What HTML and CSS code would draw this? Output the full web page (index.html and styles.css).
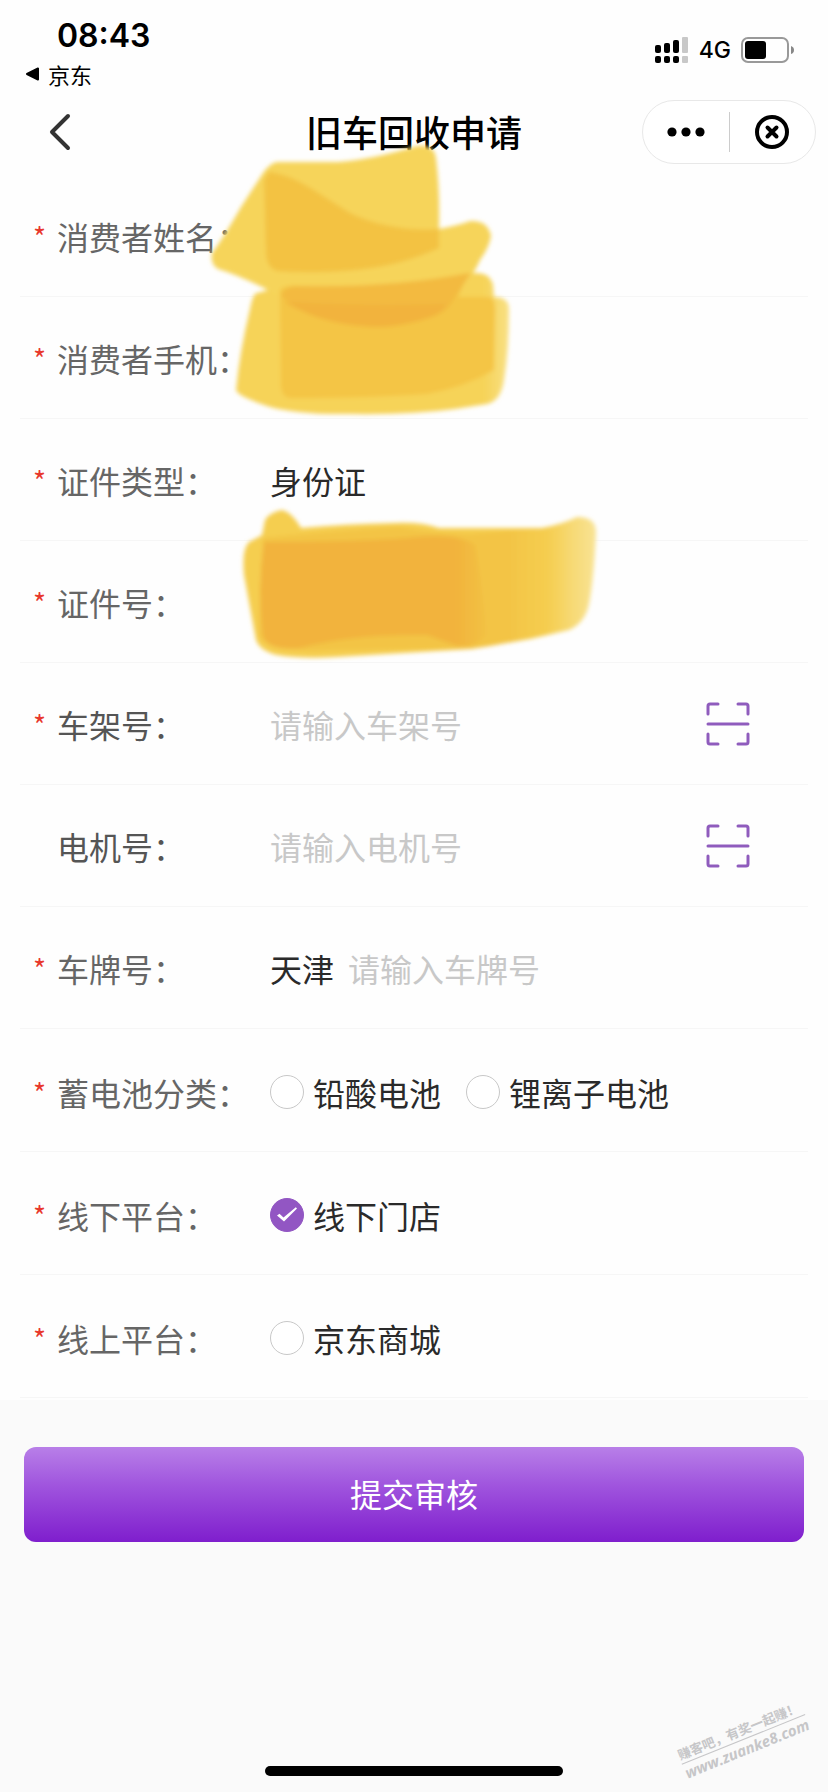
FILE: index.html
```html
<!DOCTYPE html>
<html lang="zh-CN">
<head>
<meta charset="utf-8">
<meta name="viewport" content="width=device-width, initial-scale=1">
<title>旧车回收申请</title>
<link rel="stylesheet" href="styles.css">
</head>
<body>
<div class="page">
  <div class="status">
    <div class="status-left">
      <span class="clock">08:43</span>
      <a class="return" href="#"><svg width="14" height="14" viewBox="0 0 14 14" aria-hidden="true"><path d="M1 7 12 1.500V12.500Z" stroke="#000" stroke-width="2" stroke-linejoin="round"/></svg>京东</a>
    </div>
    <div class="status-right">
      <svg width="34" height="28" viewBox="0 0 34 28" aria-hidden="true">
        <g fill="#000"><rect x="0" y="9" width="6" height="8" rx="2"/><rect x="9" y="7" width="6" height="10" rx="2"/><rect x="18" y="4" width="6" height="13" rx="2"/><rect x="0" y="20" width="6" height="7" rx="2"/><rect x="9" y="20" width="6" height="7" rx="2"/><rect x="18" y="20" width="6" height="7" rx="2"/></g>
        <g fill="#c8c8c8"><rect x="27" y="1" width="6" height="16" rx="1"/><rect x="27" y="20" width="6" height="7" rx="1"/></g>
      </svg>
      <span class="network">4G</span>
      <svg width="54" height="26" viewBox="0 0 54 26" aria-hidden="true">
        <rect x="1" y="1" width="46" height="24" rx="6" fill="none" stroke="#999" stroke-width="2"/>
        <rect x="4" y="4" width="21" height="18" rx="3"/>
        <path d="M50 9Q53 10 53 13T50 17Z" fill="#888"/>
      </svg>
    </div>
  </div>

  <header class="nav">
    <button class="back" type="button" aria-label="返回"><svg width="24" height="38" viewBox="0 0 24 38" aria-hidden="true"><path d="M20 3 4 19 20 35" fill="none" stroke="#333" stroke-width="4" stroke-linecap="round" stroke-linejoin="round"/></svg></button>
    <h1 class="title">旧车回收申请</h1>
    <div class="capsule">
      <button class="capsule-btn more" type="button" aria-label="更多"><svg width="38" height="10" viewBox="0 0 38 10" aria-hidden="true"><circle cx="5" cy="5" r="4.600"/><circle cx="19" cy="5" r="4.600"/><circle cx="33" cy="5" r="4.600"/></svg></button>
      <button class="capsule-btn" type="button" aria-label="关闭"><svg width="34" height="34" viewBox="0 0 34 34" fill="none" stroke="#000" stroke-width="4" stroke-linecap="round" aria-hidden="true"><circle cx="17" cy="17" r="15"/><path d="m12.500 12.500 9 9m0-9-9 9"/></svg></button>
    </div>
  </header>

  <form class="form">
    <div class="fields">
      <div class="row"><span class="star">*</span><label class="label" for="name">消费者姓名：</label><input class="input" id="name" type="text"></div>
      <div class="row"><span class="star">*</span><label class="label" for="phone">消费者手机：</label><input class="input" id="phone" type="tel"></div>
      <div class="row"><span class="star">*</span><label class="label" for="idtype">证件类型：</label><select class="select" id="idtype"><option>身份证</option></select></div>
      <div class="row"><span class="star">*</span><label class="label" for="idno">证件号：</label><input class="input" id="idno" type="text"></div>
      <div class="row"><span class="star">*</span><label class="label dark" for="frame">车架号：</label><input class="input" id="frame" type="text" placeholder="请输入车架号">
        <button class="scan" type="button" aria-label="扫描车架号"><svg width="44" height="44" viewBox="0 0 44 44" aria-hidden="true"><path d="M2 12V4Q2 2 4 2H12M32 2H40Q42 2 42 4V12M42 32V40Q42 42 40 42H32M12 42H4Q2 42 2 40V32M2 22H42"/></svg></button></div>
      <div class="row"><span class="star"></span><label class="label dark" for="motor">电机号：</label><input class="input" id="motor" type="text" placeholder="请输入电机号">
        <button class="scan" type="button" aria-label="扫描电机号"><svg width="44" height="44" viewBox="0 0 44 44" aria-hidden="true"><path d="M2 12V4Q2 2 4 2H12M32 2H40Q42 2 42 4V12M42 32V40Q42 42 40 42H32M12 42H4Q2 42 2 40V32M2 22H42"/></svg></button></div>
      <div class="row"><span class="star">*</span><label class="label" for="plate">车牌号：</label><select class="select province" aria-label="省份"><option>天津</option></select><input class="input" id="plate" type="text" placeholder="请输入车牌号"></div>
      <div class="row options" role="radiogroup" aria-labelledby="battery"><span class="star">*</span><span class="label" id="battery">蓄电池分类：</span>
        <label class="option"><input class="radio" type="radio" name="battery">铅酸电池</label>
        <label class="option"><input class="radio" type="radio" name="battery">锂离子电池</label></div>
      <div class="row options" role="radiogroup" aria-labelledby="offline"><span class="star">*</span><span class="label" id="offline">线下平台：</span>
        <label class="option"><input class="radio" type="radio" name="platform" checked><svg class="tick" width="34" height="34" viewBox="0 0 34 34" aria-hidden="true"><path d="M7 17.500 9.500 15.800 13.500 19.500 25.800 9.200 27 10.400 14 23.500Z" fill="#fff"/></svg>线下门店</label></div>
      <div class="row options" role="radiogroup" aria-labelledby="online"><span class="star">*</span><span class="label" id="online">线上平台：</span>
        <label class="option"><input class="radio" type="radio" name="platform">京东商城</label></div>
    </div>
    <div class="actions"><button class="submit" type="submit">提交审核</button></div>
  </form>

  <footer class="footer">
    <div class="watermark"><span class="slogan">赚客吧，有奖一起赚！</span><span class="site">www.zuanke8.com</span></div>
    <div class="home"></div>
  </footer>

  <svg class="marker" width="620" height="680" viewBox="0 0 620 680" aria-hidden="true">
    <defs>
      <filter id="soft" x="-10%" y="-10%" width="120%" height="120%"><feGaussianBlur stdDeviation="2"/></filter>
      <linearGradient id="fade" gradientUnits="userSpaceOnUse" x1="545" y1="0" x2="600" y2="0"><stop offset="0" stop-color="#f5ce50"/><stop offset="1" stop-color="#f9e59a"/></linearGradient>
      <linearGradient id="fade2" gradientUnits="userSpaceOnUse" x1="484" y1="0" x2="512" y2="0"><stop offset="0" stop-color="#f6d358"/><stop offset="1" stop-color="#f9e28a"/></linearGradient>
      <linearGradient id="fade3" gradientUnits="userSpaceOnUse" x1="510" y1="0" x2="568" y2="0"><stop offset="0" stop-color="#f3c445"/><stop offset="1" stop-color="#f5ce50" stop-opacity="0"/></linearGradient>
      <linearGradient id="fade4" gradientUnits="userSpaceOnUse" x1="455" y1="0" x2="492" y2="0"><stop offset="0" stop-color="#f2b33c"/><stop offset="1" stop-color="#f3c445"/></linearGradient>
    </defs>
    <g filter="url(#soft)">
      <path fill="url(#fade2)" d="M257 293Q274 288 293 285Q390 285 470 274Q488 270 493 284L494 297Q509 297 509 309Q509 350 504 380Q501 401 487 404L455 409Q410 415 350 414Q300 415 270 407Q237 396 236 390Q240 350 250 309Q253 293 257 293Z"/>
      <path fill="#f6d45a" d="M277 162H338Q370 160 417 146Q434 144 436 158Q440 190 439 229Q460 225 470 221Q488 220 491 236Q489 248 480 260Q474 275 455 297Q447 312 435 316Q405 327 376 327Q330 325 300 307Q280 297 266 289Q238 275 218 269Q210 264 212 253Q222 240 241 207L263 173Q270 163 277 162Z"/>
      <path fill="#f3c243" d="M269 172Q290 174 320 194L350 213Q390 232 439 229V248Q400 266 356 270Q310 274 277 271Q267 268 266 253L264 180Z"/>
      <path fill="#f4c545" d="M280 290Q284 285 300 286Q390 289 468 273L458 297H490Q496 299 495 315L494 370Q465 387 427 394Q370 398 290 398Q282 398 281 386Z"/>
      <path fill="#f3ba40" d="M281 296Q286 285 300 286Q390 288 471 273L455 297Q447 312 435 316Q405 327 376 327Q330 325 300 309Z"/>
      <path fill="#f2b33c" d="M284 302Q365 307 447 304Q440 314 430 317Q400 327 376 327Q330 325 300 310Z"/>
      <path fill="url(#fade)" d="M265 520Q269 513 281 510Q291 511 301 528Q345 524 395 523Q422 522 439 528H542Q563 524 577 517Q596 517 596 532Q594 578 589 604Q585 623 569 630L530 639L470 649L336 657Q301 659 277 655Q260 651 256 640L244 575Q241 543 253 540L262 535Z"/>
      <path fill="url(#fade3)" d="M263 538Q340 530 400 527Q430 533 470 534L568 526V625L534 637Q500 645 470 649L336 650Q260 654 259 633Z"/>
      <path fill="url(#fade4)" d="M264 542Q350 542 407 538Q455 532 475 545Q483 590 487 635Q472 650 455 645L427 635Q350 634 300 648Q268 651 263 636Q257 590 264 542Z"/>
    </g>
  </svg>
</div>
</body>
</html>
```
FILE: styles.css
```css
* { box-sizing: border-box; }

body {
  margin: 0;
  background: #fafafa;
  font-family: "Noto Sans CJK SC", sans-serif;
  color: #2a2a2a;
}

button, input, select { font: inherit; color: inherit; border: 0; background: none; padding: 0; margin: 0; }
svg { display: block; }

.page {
  position: relative;
  display: flex;
  flex-direction: column;
  min-height: 100vh;
  font-size: 32px;
}

.status {
  display: flex;
  justify-content: space-between;
  align-items: flex-start;
  height: 100px;
  padding: 16px 33px 0 26px;
  background: #fefefe;
  color: #000;
}
.status-left { display: flex; flex-direction: column; gap: 2px; }
.clock { padding-left: 31px; font: 600 32px/40px Inter, sans-serif; }
.return { display: flex; align-items: center; gap: 8px; font-size: 22px; line-height: 32px; color: #000; text-decoration: none; }
.status-right { display: flex; align-items: center; gap: 10px; padding-top: 20px; }
.network { font: 500 23px/28px Inter, sans-serif; }

.nav {
  display: grid;
  grid-template-columns: 1fr auto 1fr;
  align-items: center;
  height: 75px;
  padding: 0 12px 11px 48px;
  background: #fefefe;
}
.back { justify-self: start; width: 24px; }
.title { margin: 0 0 2px -36px; font-size: 36px; line-height: 48px; font-weight: 500; color: #000; }
.capsule { justify-self: end; display: flex; align-items: center; width: 174px; height: 64px; border: 1px solid #e8e8e8; border-radius: 32px; background: #fff; }
.capsule-btn { flex: 1; display: flex; align-items: center; justify-content: center; height: 40px; }
.more { border-right: 1px solid #ccc; }

.fields { padding: 0 20px 2px; background: #fefefe; }
.row { display: flex; align-items: center; height: 122px; padding: 0 58px 0 13px; border-bottom: 1px solid #f6f6f6; }
.options { height: 123px; padding-top: 3px; padding-right: 0; }
.star { flex: none; width: 24px; font: 28px/28px "Noto Sans CJK SC", sans-serif; color: #e8382d; }
.label { flex: none; width: 213px; line-height: 40px; color: #666; white-space: nowrap; }
.dark { color: #555; }
.input { flex: 1; min-width: 0; height: 48px; outline: none; }
.input::placeholder { color: #c8c8c8; opacity: 1; }
.select { appearance: none; height: 48px; outline: none; }
.province { margin-right: 13px; }
.scan { flex: none; }
.scan path { fill: none; stroke: #8f5cbd; stroke-width: 3; stroke-linecap: round; }

.option { position: relative; display: flex; align-items: center; gap: 9px; margin-right: 25px; line-height: 40px; white-space: nowrap; }
.radio { appearance: none; width: 34px; height: 34px; border: 1px solid #c8c8c8; border-radius: 50%; background: #fff; }
.radio:checked { border-color: #9256c3; background: #9256c3; }
.tick { position: absolute; left: 0; top: 3px; }

.actions { padding: 47px 24px 0; }
.submit { display: block; width: 100%; height: 95px; padding-bottom: 4px; border-radius: 12px; background: linear-gradient(#b87fe8, #a055de 40%, #7f1ecd); color: #fff; }

.footer { display: flex; flex: 1; flex-direction: column; justify-content: flex-end; align-items: center; padding-bottom: 16px; }
.home { width: 36%; height: 10px; border-radius: 5px; background: #000; }
.watermark { position: absolute; right: 18px; bottom: 34px; display: flex; flex-direction: column; transform: rotate(-22deg); color: #c6c6c8; }
.slogan { border-bottom: 1px solid #c6c6c8; font-size: 13px; line-height: 18px; font-weight: 700; }
.site { font: italic 700 15px/18px "Open Sans", sans-serif; }

.marker { position: absolute; left: 0; top: 0; pointer-events: none; }
```
